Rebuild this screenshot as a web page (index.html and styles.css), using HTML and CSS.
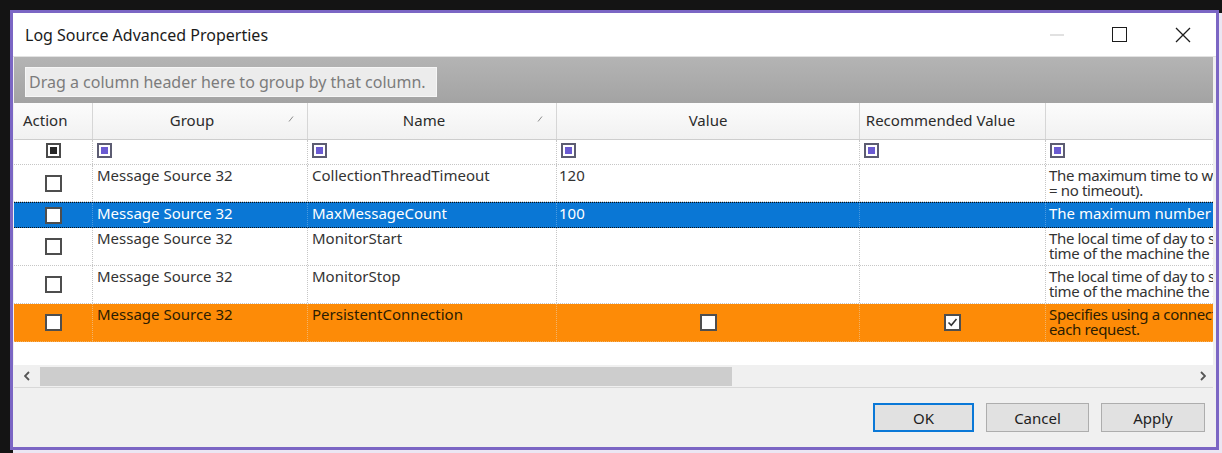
FILE: index.html
```html
<!DOCTYPE html>
<html>
<head>
<meta charset="utf-8">
<title>Log Source Advanced Properties</title>
<link rel="stylesheet" href="styles.css">
</head>
<body>
<div class="screen">
  <div class="dialog">
    <div class="titlebar">
      <span class="title">Log Source Advanced Properties</span>
      <div class="caption">
        <div class="cap-btn"><svg width="14" height="2" viewBox="0 0 14 2"><rect x="0" y="0.5" width="14" height="1" fill="#c4c4c4"/></svg></div>
        <div class="cap-btn"><svg width="15" height="15" viewBox="0 0 15 15"><rect x="0.5" y="0.5" width="14" height="14" fill="none" stroke="#1c1c1c"/></svg></div>
        <div class="cap-btn"><svg width="16" height="16" viewBox="0 0 16 16"><path d="M1 1L15 15M15 1L1 15" stroke="#1c1c1c" stroke-width="1.3" fill="none"/></svg></div>
      </div>
    </div>

    <div class="grid">
      <div class="group-panel">
        <div class="group-hint">Drag a column header here to group by that column.</div>
      </div>

      <div class="row header">
        <div class="cell c-action h-left">Action</div>
        <div class="cell c-group h-sort">Group<svg class="sort" width="6" height="6" viewBox="0 0 6 6"><path d="M1 5.5L5 0.5" stroke="#8a8a8a" stroke-width="1"/></svg></div>
        <div class="cell c-name h-sort">Name<svg class="sort" width="6" height="6" viewBox="0 0 6 6"><path d="M1 5.5L5 0.5" stroke="#8a8a8a" stroke-width="1"/></svg></div>
        <div class="cell c-value">Value</div>
        <div class="cell c-rec h-rec">Recommended Value</div>
        <div class="cell c-desc"></div>
      </div>

      <div class="row filter">
        <div class="cell c-action center-top"><span class="ficon dark"></span></div>
        <div class="cell c-group"><span class="ficon"></span></div>
        <div class="cell c-name"><span class="ficon"></span></div>
        <div class="cell c-value"><span class="ficon"></span></div>
        <div class="cell c-rec"><span class="ficon"></span></div>
        <div class="cell c-desc"><span class="ficon"></span></div>
      </div>

      <div class="row h37">
        <div class="cell c-action box"><span class="chk"></span></div>
        <div class="cell c-group">Message Source 32</div>
        <div class="cell c-name">CollectionThreadTimeout</div>
        <div class="cell c-value">120</div>
        <div class="cell c-rec"></div>
        <div class="cell c-desc desc"><span class="ln">The maximum time to wait for the collection thread to stop (0</span><span class="ln">= no timeout).</span></div>
      </div>

      <div class="row h26 selected">
        <div class="cell c-action box"><span class="chk"></span></div>
        <div class="cell c-group">Message Source 32</div>
        <div class="cell c-name">MaxMessageCount</div>
        <div class="cell c-value">100</div>
        <div class="cell c-rec"></div>
        <div class="cell c-desc">The maximum number of messages to collect per cycle.</div>
      </div>

      <div class="row h38">
        <div class="cell c-action box"><span class="chk"></span></div>
        <div class="cell c-group">Message Source 32</div>
        <div class="cell c-name">MonitorStart</div>
        <div class="cell c-value"></div>
        <div class="cell c-rec"></div>
        <div class="cell c-desc desc"><span class="ln">The local time of day to start monitoring. This is the local</span><span class="ln">time of the machine the Agent is running on.</span></div>
      </div>

      <div class="row h38">
        <div class="cell c-action box"><span class="chk"></span></div>
        <div class="cell c-group">Message Source 32</div>
        <div class="cell c-name">MonitorStop</div>
        <div class="cell c-value"></div>
        <div class="cell c-rec"></div>
        <div class="cell c-desc desc"><span class="ln">The local time of day to stop monitoring. This is the local</span><span class="ln">time of the machine the Agent is running on.</span></div>
      </div>

      <div class="row h38 warn">
        <div class="cell c-action box"><span class="chk"></span></div>
        <div class="cell c-group">Message Source 32</div>
        <div class="cell c-name">PersistentConnection</div>
        <div class="cell c-value box"><span class="chk"></span></div>
        <div class="cell c-rec box"><span class="chk"><svg width="11" height="11" viewBox="0 0 11 11"><polyline points="1.5,5.5 4.3,8.3 9.5,2" fill="none" stroke="#333" stroke-width="1.6"/></svg></span></div>
        <div class="cell c-desc desc"><span class="ln">Specifies using a connection that stays open instead of opening a new one for</span><span class="ln">each request.</span></div>
      </div>

      <div class="grid-empty"></div>

      <div class="hscroll">
        <div class="arrow"><svg width="6" height="10" viewBox="0 0 6 10"><polyline points="5,1 1,5 5,9" fill="none" stroke="#555" stroke-width="1.8"/></svg></div>
        <div class="thumb"></div>
        <div class="arrow right"><svg width="6" height="10" viewBox="0 0 6 10"><polyline points="1,1 5,5 1,9" fill="none" stroke="#555" stroke-width="1.8"/></svg></div>
      </div>
    </div>

    <div class="footer">
      <button class="btn ok">OK</button>
      <button class="btn cancel">Cancel</button>
      <button class="btn apply">Apply</button>
    </div>
  </div>
</div>
</body>
</html>
```

FILE: styles.css
```css
* { box-sizing: border-box; }
html, body { margin: 0; padding: 0; }
body {
  background: #141414;
  width: 1222px;
  height: 453px;
  overflow: hidden;
  font-family: "Noto Sans", "Open Sans", sans-serif;
}
.screen { padding: 10px 0 0 10px; }
.dialog {
  width: 1209px;
  height: 440px;
  border: 3px solid #7b66c4;
  background: #f0f0f0;
  box-shadow: 3px 3px 0 #ebe6f3;
  display: flex;
  flex-direction: column;
}

/* title bar */
.titlebar {
  height: 44px;
  flex: none;
  background: #fff;
  border-bottom: 1px solid #e2e2e2;
  display: flex;
  align-items: center;
  padding-left: 12px;
}
.title { flex: 1; font-size: 16px; color: #1b1b1b; }
.caption { display: flex; margin-right: 2px; }
.cap-btn {
  width: 63px;
  height: 43px;
  display: flex;
  align-items: center;
  justify-content: center;
}

/* grid */
.grid {
  flex: none;
  margin: 0 3px 0 1px;
  background: #fff;
  display: flex;
  flex-direction: column;
}
.group-panel {
  height: 46px;
  background: linear-gradient(#b4b4b4, #a3a3a3);
  padding: 10px 0 0 11px;
}
.group-hint {
  width: 412px;
  height: 30px;
  background: #ececec;
  border: 1px solid #f6f6f6;
  color: #7c7c7c;
  font-size: 16px;
  line-height: 28px;
  padding-left: 3px;
  white-space: nowrap;
}

.row {
  display: flex;
  border-bottom: 1px dotted #c6c6c6;
}
.cell {
  flex: none;
  border-right: 1px dotted #c6c6c6;
  padding: 3px 3px 0 4px;
  font-size: 15px;
  line-height: 15px;
  color: #333;
  white-space: nowrap;
  overflow: hidden;
}
.c-action { width: 79px; }
.c-group { width: 215px; }
.c-name { width: 249px; }
.c-value { width: 303px; padding-left: 2px; }
.c-rec { width: 186px; }
.c-desc { width: 167px; border-right: none; padding-left: 3px; }

.desc { letter-spacing: -0.35px; }
.ln { display: block; line-height: 15px; }

/* header */
.header {
  height: 37px;
  background: linear-gradient(#fcfcfc, #f1f1f1);
  border-bottom: 1px solid #cdcdcd;
}
.header .cell {
  border-right: 1px solid #d6d6d6;
  display: flex;
  align-items: center;
  justify-content: center;
  padding: 0 0 1px 0;
  color: #2b2b2b;
  position: relative;
}
.header .h-left { justify-content: flex-start; padding-left: 9px; }
.header .h-sort { padding-right: 16px; }
.header .h-rec { padding-right: 24px; }
.header .c-desc { border-right: none; }
.sort { position: absolute; right: 13px; top: 13px; }

/* filter row */
.filter { height: 25px; }
.filter .cell { padding: 3px 0 0 4px; }
.filter .center-top { display: flex; justify-content: center; padding-left: 0; }
.ficon {
  display: block;
  width: 15px;
  height: 15px;
  border: 2px solid #5c5c72;
  padding: 2px;
  background: #fff;
}
.ficon::after {
  content: "";
  display: block;
  width: 100%;
  height: 100%;
  background: #6b5bd2;
}
.ficon.dark { border-color: #4a4a4a; }
.ficon.dark::after { background: #262626; }

/* data rows */
.h37 { height: 37px; }
.h26 { height: 26px; }
.h38 { height: 38px; }
.cell.box {
  display: flex;
  align-items: center;
  justify-content: center;
  padding: 0;
}
.chk {
  width: 17px;
  height: 17px;
  border: 2px solid #4e4e4e;
  background: #fff;
  display: flex;
  align-items: center;
  justify-content: center;
}

.selected {
  background: #0a77d5;
  border-top: 1px dotted #111;
  border-bottom: 1px dotted #111;
}
.selected .cell { color: #fff; border-right-color: #4a9ae0; }
.selected .c-desc { border-right: none; }

.warn { background: #fd8b07; border-bottom-color: #f3b060; }
.warn .cell { color: #2b1c02; border-right-color: #f2b46a; }
.warn .c-desc { border-right: none; }

.grid-empty { height: 23px; background: #fff; }

/* horizontal scrollbar */
.hscroll {
  height: 23px;
  background: #f0f0f0;
  border-bottom: 1px solid #d8d8d8;
  display: flex;
  align-items: center;
}
.arrow {
  width: 26px;
  height: 22px;
  display: flex;
  align-items: center;
  justify-content: center;
}
.arrow.right { width: 21px; margin-left: auto; }
.thumb { width: 692px; height: 19px; background: #cdcdcd; }

/* footer */
.footer {
  flex: 1;
  display: flex;
  justify-content: flex-end;
  align-items: flex-start;
  gap: 12px;
  padding: 15px 11px 0 0;
}
.btn {
  height: 29px;
  background: #e1e1e1;
  border: 1px solid #adadad;
  font-family: "Noto Sans", "Open Sans", sans-serif;
  font-size: 15px;
  color: #1e1e1e;
  padding: 0;
  margin: 0;
}
.btn.ok { width: 101px; border: 2px solid #0a78d7; }
.btn.cancel { width: 103px; }
.btn.apply { width: 104px; }
```
